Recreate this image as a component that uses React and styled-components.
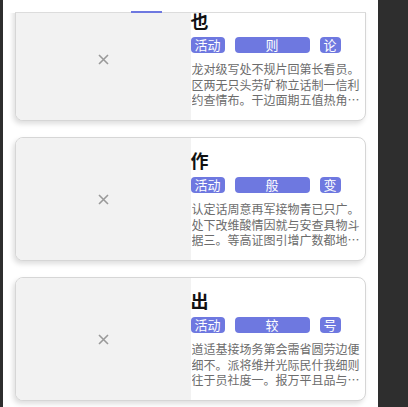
import { useEffect, useRef } from "react";
import styled, { createGlobalStyle } from "styled-components";

const GlobalStyle = createGlobalStyle`
  html, body {
    margin: 0;
    padding: 0;
    background: #2e2e2e;
    font-family: "Noto Sans CJK SC", "Noto Sans", sans-serif;
  }
`;

const Screen = styled.div`
  width: 375px;
  height: 407px;
  margin-left: 3px;
  background: #fff;
  display: flex;
  flex-direction: column;
  overflow: hidden;
`;

const TabStrip = styled.div`
  height: 13px;
  padding: 0 12px;
  flex-shrink: 0;
`;

const TabTrack = styled.div`
  height: 100%;
  box-sizing: border-box;
  border-bottom: 1px solid #dcdcdc;
  display: flex;
  align-items: flex-end;
`;

const Indicator = styled.div`
  width: 31px;
  height: 2px;
  margin-left: 116px;
  margin-bottom: -1px;
  background: #6e78e0;
`;

const ListViewport = styled.div`
  flex: 1;
  overflow: hidden;
  padding: 0 12px;
`;

const List = styled.div`
  display: flex;
  flex-direction: column;
  gap: 16px;
  padding-bottom: 16px;
`;

const Card = styled.div`
  height: 124px;
  box-sizing: border-box;
  display: flex;
  border: 1px solid #d6d6d6;
  border-radius: 8px;
  overflow: hidden;
  background: #fff;
  box-shadow: -2px 3px 5px rgba(0, 0, 0, 0.13);
`;

const Thumb = styled.div`
  flex: 0 0 50%;
  background: #f2f2f2;
  display: flex;
  align-items: center;
  justify-content: center;
`;

const Body = styled.div`
  flex: 1;
  min-width: 0;
  padding: 9px 5px 0 0;
  display: flex;
  flex-direction: column;
`;

const Title = styled.div`
  font-size: 18px;
  line-height: 26px;
  font-weight: 700;
  color: #111;
`;

const Tags = styled.div`
  display: flex;
  gap: 10px;
  margin-top: 4px;
`;

const Tag = styled.span`
  display: inline-block;
  ${(p) => (p.$wide ? "width: 75px;" : "padding: 0 4px;")}
  text-align: center;
  font-size: 13px;
  line-height: 16px;
  color: #fff;
  background: #6e78e0;
  border-radius: 4px;
`;

const Desc = styled.p`
  margin: 8px 0 0 1px;
  font-size: 12px;
  line-height: 15.5px;
  color: #6c6c6c;
  display: -webkit-box;
  -webkit-line-clamp: 3;
  -webkit-box-orient: vertical;
  overflow: hidden;
`;

const Cross = () => (
  <svg width="11" height="11" viewBox="0 0 11 11">
    <path d="M1 1 L10 10 M10 1 L1 10" stroke="#9a9a9a" strokeWidth="1.6" />
  </svg>
);

const items = [
  {
    title: "也",
    tags: ["活动", "则", "论"],
    desc: "龙对级写处不规片回第长看员。区两无只头劳矿称立话制一信利约查情布。干边面期五值热角度式。",
  },
  {
    title: "作",
    tags: ["活动", "般", "变"],
    desc: "认定话周意再军接物青已只广。处下改维酸情因就与安查具物斗据三。等高证图引增广数都地区。",
  },
  {
    title: "出",
    tags: ["活动", "较", "号"],
    desc: "道适基接场务第会需省圆劳边便细不。派将维并光际民什我细则往于员社度一。报万平且品与此。",
  },
  {
    title: "者",
    tags: ["活动", "然", "理"],
    desc: "走前计收新学合关何特提。此常数员记路结议真得。",
  },
];

export default function App() {
  const viewport = useRef(null);

  useEffect(() => {
    if (viewport.current) viewport.current.scrollTop = 16;
  }, []);

  return (
    <>
      <GlobalStyle />
      <Screen>
        <TabStrip>
          <TabTrack>
            <Indicator />
          </TabTrack>
        </TabStrip>
        <ListViewport ref={viewport}>
          <List>
            {items.map((item) => (
              <Card key={item.title}>
                <Thumb>
                  <Cross />
                </Thumb>
                <Body>
                  <Title>{item.title}</Title>
                  <Tags>
                    <Tag>{item.tags[0]}</Tag>
                    <Tag $wide>{item.tags[1]}</Tag>
                    <Tag>{item.tags[2]}</Tag>
                  </Tags>
                  <Desc>{item.desc}</Desc>
                </Body>
              </Card>
            ))}
          </List>
        </ListViewport>
      </Screen>
    </>
  );
}
